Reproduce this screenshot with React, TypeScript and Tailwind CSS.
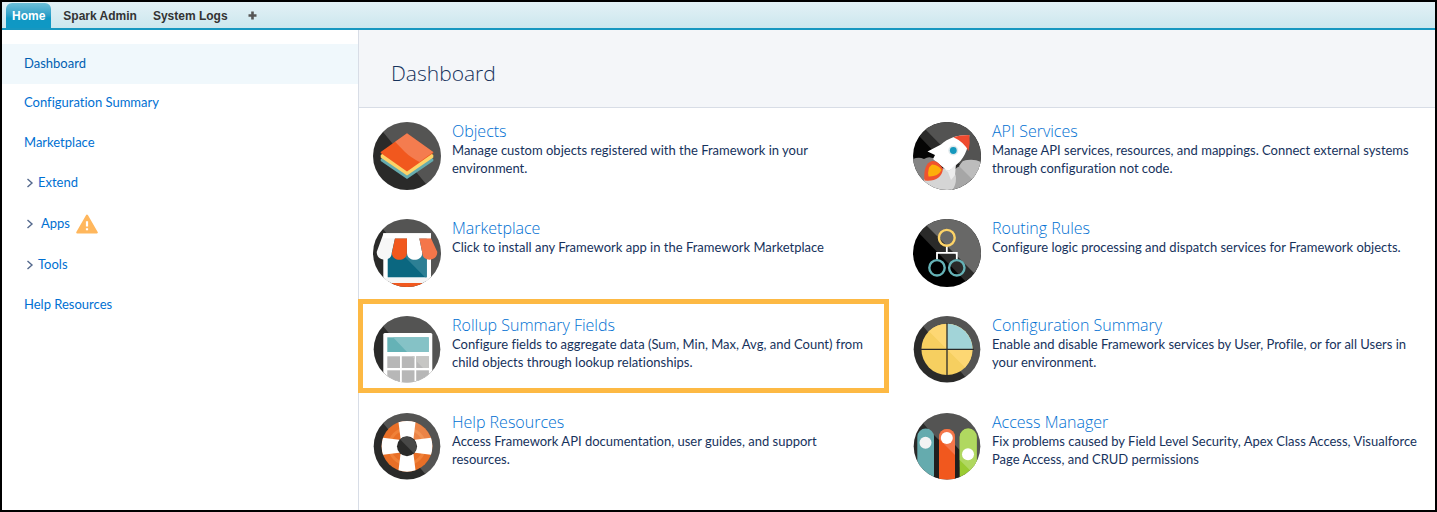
import { useId, type ReactNode } from "react";

function Badge({ base = "#2a2a29", small = false, glare = 0.2, children }: { base?: string; small?: boolean; glare?: number; children: ReactNode }) {
  const id = useId();
  const cy = small ? 33.3 : 34;
  const r = small ? 33.3 : 34;
  return (
    <svg viewBox="0 0 68 68" className="size-[68px] shrink-0" aria-hidden="true">
      <clipPath id={id}>
        <circle cx="34" cy={cy} r={r} />
      </clipPath>
      <g clipPath={`url(#${id})`}>
        <rect width="68" height="68" fill={base} />
        <path d="M10 10 L10 0 H68 V68 H58 Z" fill="#fff" opacity={glare} />
        {children}
      </g>
    </svg>
  );
}

const ObjectsIcon = () => (
  <Badge>
    <path d="M7.7 37 L12 34 H56 L60.3 37 V39 L34 57 L7.7 39 Z" fill="#65abae" />
    <path d="M7.7 33 L12 30 H56 L60.3 33 V35.5 L34 53.5 L7.7 35.5 Z" fill="#fdd367" />
    <path d="M7.7 30 L34 11.3 L60.3 30 V31 L34 49.5 L7.7 31 Z" fill="#f1581e" />
    <path d="M22 19.8 L34 11.3 L60.3 30 L46.5 40 Q37 35 32 30 Z" fill="#fff" opacity="0.22" />
  </Badge>
);

const MarketplaceIcon = () => (
  <Badge>
    <rect x="10.3" y="14.3" width="47.7" height="48" fill="#fff" />
    <rect x="14.7" y="19.3" width="39" height="39" fill="#0b6780" />
    <path d="M30 36 H53.7 V58.3 H52 Z" fill="#2d7f94" />
    <rect x="0" y="59" width="68" height="5" fill="#f5f5f5" />
    <rect x="0" y="64" width="68" height="4" fill="#f1581e" />
    <path d="M10.3 15 L3.7 33 C3.7 43 18.7 43 18.7 34 L22 19.3 V15 Z" fill="#f7f7f7" />
    <path d="M22 19.3 H34 L33.9 34 C33.9 43 18.9 43 18.9 34 Z" fill="#f1581e" />
    <path d="M34 15 H46.3 V19.3 L49.3 34 C49.3 43 34 43 34 34 Z" fill="#fff" />
    <path d="M46.3 19.3 H58 L64.3 33 C64.3 43 49.3 43 49.3 34 Z" fill="#f4764a" />
    <path d="M10.3 14.3 H58 V19.3 H10.3 Z" fill="#fff" />
  </Badge>
);

const RollupIcon = () => (
  <Badge small>
    <rect x="10.3" y="17" width="49" height="54" rx="1.5" fill="#fff" />
    <rect x="14.3" y="21.3" width="41.4" height="14.7" fill="#65b2b6" />
    <path d="M20 21.3 H55.7 V36 H34 Z" fill="#85c2c6" />
    {[14.3, 28.8, 43.2].map((x) =>
      [40.3, 54.3].map((y) => <rect key={`${x}-${y}`} x={x} y={y} width="12.7" height="11.7" fill="#b7b7b7" />),
    )}
    <path d="M38.5 40.3 H41.5 V43 Z M43.2 45 V40.3 H55.9 V52 H50 Z" fill="#c6c6c4" />
  </Badge>
);

const HelpIcon = () => (
  <Badge small>
    <circle cx="34" cy="33.3" r="25.4" fill="#e86f27" />
    <circle cx="34" cy="33.3" r="17.5" fill="none" stroke="#f08138" strokeWidth="3" />
    <path d="M34 33.3 L34 8 A25.4 25.4 0 0 1 59.4 33.3 Z" fill="#fff" opacity="0.15" />
    <path d="M25.5 9.3 Q34 6.5 42.5 9.3 L39.5 33.3 L42.5 57.3 Q34 60 25.5 57.3 L28.5 33.3 Z" fill="#fff" />
    <path d="M10 24.8 Q7.3 33.3 10 41.8 L34 38.8 L58 41.8 Q60.7 33.3 58 24.8 L34 27.8 Z" fill="#fff" />
    <circle cx="34" cy="33.3" r="10" fill="#2a2a29" />
    <path d="M27 26.2 A10 10 0 0 1 41 40.4 Z" fill="#484847" />
  </Badge>
);

const ApiIcon = () => (
  <Badge base="#050505" glare={0}>
    <path d="M6 14 L14 6 L68 60 V68 H58 Z" fill="#2a2a29" />
    <path d="M12 7 V0 H68 V64 Z" fill="#535352" />
    <path d="M-2 38 Q5 34 11 37 Q17 33 23 38 V70 H-2 Z" fill="#858585" />
    <path d="M38 52 Q42 46 47 44 Q48 38 56 38 Q66 39 70 46 V70 H38 Z" fill="#a6a6a6" />
    <path d="M46 44 L68 66 V40 Q60 36 50 39 Z" fill="#bcbcbc" />
    <path d="M11 57 Q18 60 22 53 Q26 44 34 47 Q43 49 43 56 Q43 64 39 68 H11 Z" fill="#d5d5d5" />
    <path d="M28 22.5 L14.5 29.5 L22 33 L20 37 L32 47 C36 50 39 48 42 44 C50 38 55.5 29 56.3 13 C44 13 35 16 28 22.5 Z" fill="#fff" />
    <path d="M31 47 L36 49 L43 42 L42 53 L38 58 L35 50 Z" fill="#ececec" />
    <path d="M40.5 15.2 Q47 13 56.3 13 Q57.5 21 55.5 29 Q51 20 40.5 15.2 Z" fill="#ef4a2f" />
    <circle cx="40.3" cy="28.5" r="5" fill="#dfe9ec" />
    <circle cx="40.3" cy="28.5" r="3.4" fill="#1598bd" />
    <path d="M19 39 Q25 38 30 47 Q28 60 11.5 58.5 Q10 42 19 39 Z" fill="#f0532e" />
    <path d="M19 42.5 Q26 43 28.5 48 Q25 55 15.5 54.5 Q14 46 19 42.5 Z" fill="#fdaf0a" />
  </Badge>
);

const RoutingIcon = () => (
  <Badge base="#000" glare={0}>
    <path d="M4 12 L12 4 L68 60 V68 H58 Z" fill="#2a2a29" />
    <path d="M14 7 V0 H68 V61 Z" fill="#686867" />
    <path d="M33.8 27 V33.8 M24 40.5 V33.8 H43.8 V40.5" fill="none" stroke="#fff" strokeWidth="1.8" />
    <circle cx="33.8" cy="18.8" r="7.9" fill="none" stroke="#fdd367" strokeWidth="2.4" />
    <circle cx="24" cy="48.8" r="7.7" fill="none" stroke="#65b2b6" strokeWidth="2.4" />
    <circle cx="43.8" cy="48.8" r="7.7" fill="none" stroke="#65b2b6" strokeWidth="2.4" />
  </Badge>
);

const ConfigIcon = () => (
  <Badge small>
    <circle cx="34" cy="33.3" r="25.6" fill="#f6cf60" />
    <path d="M15.9 15.2 A25.6 25.6 0 0 1 52.1 51.4 Z" fill="#fdd773" />
    <path d="M34 33.3 V7.7 A25.6 25.6 0 0 1 59.6 33.3 Z" fill="#a2d4d8" />
    <path d="M34 7 V60 M7 33.3 H61" stroke="#2a2a29" strokeWidth="1.3" />
  </Badge>
);

const AccessIcon = () => (
  <Badge small>
    <path d="M4.3 24 a8.4 8.4 0 0 1 16.8 0 V68 H4.3 Z" fill="#65abae" />
    <path d="M21 22 L26 27 V68 H21 Z M42 32 L46.7 37 V68 H42 Z" fill="#1f1f1e" />
    <path d="M26 24 a8 8 0 0 1 16 0 V68 H26 Z" fill="#f1581e" />
    <path d="M26 24 a8 8 0 0 1 16 0 V42 L26 26 Z" fill="#f4764a" />
    <path d="M46.7 24 a8.5 8.5 0 0 1 17 0 V68 H46.7 Z" fill="#9acb33" />
    <path d="M46.7 24 a8.5 8.5 0 0 1 17 0 V64 L46.7 47 Z" fill="#b0d860" />
    <circle cx="12.5" cy="29.7" r="6" fill="#f3f3f3" />
    <circle cx="33.8" cy="25" r="6" fill="#fff" />
    <circle cx="55" cy="41.3" r="6" fill="#fff" />
  </Badge>
);

interface Tile {
  title: string;
  text: string;
  icon: ReactNode;
  highlighted?: boolean;
}

const tiles: Tile[] = [
  { title: "Objects", text: "Manage custom objects registered with the Framework in your\nenvironment.", icon: <ObjectsIcon /> },
  { title: "API Services", text: "Manage API services, resources, and mappings. Connect external systems through configuration not code.", icon: <ApiIcon /> },
  { title: "Marketplace", text: "Click to install any Framework app in the Framework Marketplace", icon: <MarketplaceIcon /> },
  { title: "Routing Rules", text: "Configure logic processing and dispatch services for Framework objects.", icon: <RoutingIcon /> },
  { title: "Rollup Summary Fields", text: "Configure fields to aggregate data (Sum, Min, Max, Avg, and Count) from child objects through lookup relationships.", icon: <RollupIcon />, highlighted: true },
  { title: "Configuration Summary", text: "Enable and disable Framework services by User, Profile, or for all Users in your environment.", icon: <ConfigIcon /> },
  { title: "Help Resources", text: "Access Framework API documentation, user guides, and support\nresources.", icon: <HelpIcon /> },
  { title: "Access Manager", text: "Fix problems caused by Field Level Security, Apex Class Access, Visualforce Page Access, and CRUD permissions", icon: <AccessIcon /> },
];

const Chevron = () => (
  <svg viewBox="0 0 8 10" className="mr-1 h-[10px] w-[8px]" aria-hidden="true">
    <path d="M1.5 1 L6 5 L1.5 9" fill="none" stroke="#54698d" strokeWidth="1.4" />
  </svg>
);

const Warning = () => (
  <svg viewBox="0 0 22 20" className="ml-1.5 h-5 w-[22px]" role="img" aria-label="Warning">
    <path d="M11 1.6 L20.8 18.4 H1.2 Z" fill="#ffb75d" stroke="#ffb75d" strokeWidth="2" strokeLinejoin="round" />
    <path d="M11 7.2 V12.4 M11 14.2 V16.2" stroke="#fff" strokeWidth="2.2" />
  </svg>
);

const linkClass = "text-[#0070d2] hover:underline";

export default function App() {
  return (
    <div className="flex min-h-screen flex-col border-2 border-black bg-white font-[Lato,'Open_Sans',sans-serif] text-[13px] text-[#16325c] [font-variant-ligatures:no-common-ligatures]">
      <nav className="flex h-[28px] items-end border-b-2 border-[#1797c0] bg-linear-to-b from-[#e3f1f6] to-[#cce7ee] pl-1 font-['Liberation_Sans',Arial,sans-serif] text-xs font-bold text-[#333]">
        <a href="#home" className="flex h-[25px] items-center rounded-t-md bg-linear-to-b from-[#6cbfd9] via-[#0f98c4] via-60% to-[#0f98c4] px-[6px] text-white">Home</a>
        <a href="#spark" className="flex h-[25px] items-center pl-3">Spark Admin</a>
        <a href="#logs" className="flex h-[25px] items-center pl-4">System Logs</a>
        <button type="button" aria-label="All tabs" className="flex h-[25px] items-center pl-5">
          <svg viewBox="0 0 9 9" className="size-[9px]" aria-hidden="true">
            <path d="M4.5 0.5 V8.5 M0.5 4.5 H8.5" stroke="#555" strokeWidth="2.6" />
          </svg>
        </button>
      </nav>
      <div className="flex grow">
        <aside className="w-[357px] shrink-0 border-r border-[#d8dde6] pt-[14px]">
          <ul>
            <li className="flex h-10 items-center bg-[#f0f8fc] pb-px pl-[22px]"><a href="#dashboard" className="text-[#005fb2]">Dashboard</a></li>
            <li className="flex h-10 items-center pb-[2px] pl-[22px]"><a href="#configuration" className={linkClass}>Configuration Summary</a></li>
            <li className="flex h-10 items-center pb-[2px] pl-[22px]"><a href="#marketplace" className={linkClass}>Marketplace</a></li>
            <li className="flex h-10 items-center pb-[2px] pl-6"><Chevron /><a href="#extend" className={linkClass}>Extend</a></li>
            <li className="flex h-[42px] items-center pb-[2px] pl-6"><Chevron /><a href="#apps" className="flex items-center pl-[3px] text-[#0070d2]">Apps<Warning /></a></li>
            <li className="flex h-10 items-center pb-[2px] pl-6"><Chevron /><a href="#tools" className={linkClass}>Tools</a></li>
            <li className="flex h-10 items-center pb-[2px] pl-[22px]"><a href="#help" className={linkClass}>Help Resources</a></li>
          </ul>
        </aside>
        <main className="min-w-0 grow">
          <header className="flex h-[78px] items-center border-b border-[#d8dde6] bg-[#f4f6f9] pt-2 pl-8">
            <h1 className="font-['Open_Sans',sans-serif] text-[21px] leading-7 font-light">Dashboard</h1>
          </header>
          <div className="grid grid-cols-2 gap-x-[18px] gap-y-[29px] pt-[14px] pl-[14px]">
            {tiles.map((tile) => (
              <section key={tile.title} className="relative flex min-h-[68px] gap-[11px] pr-3">
                {tile.icon}
                <div>
                  <h2 className="pb-px font-['Open_Sans',sans-serif] text-base leading-[18px] font-light"><a href="#tile" className={linkClass}>{tile.title}</a></h2>
                  <p className="leading-[18px] whitespace-pre-line">{tile.text}</p>
                </div>
                {tile.highlighted && (
                  <div className="pointer-events-none absolute -top-[17px] right-[6px] -bottom-[9px] -left-[15px] border-[5px] border-[#fdb944]" />
                )}
              </section>
            ))}
          </div>
        </main>
      </div>
    </div>
  );
}
